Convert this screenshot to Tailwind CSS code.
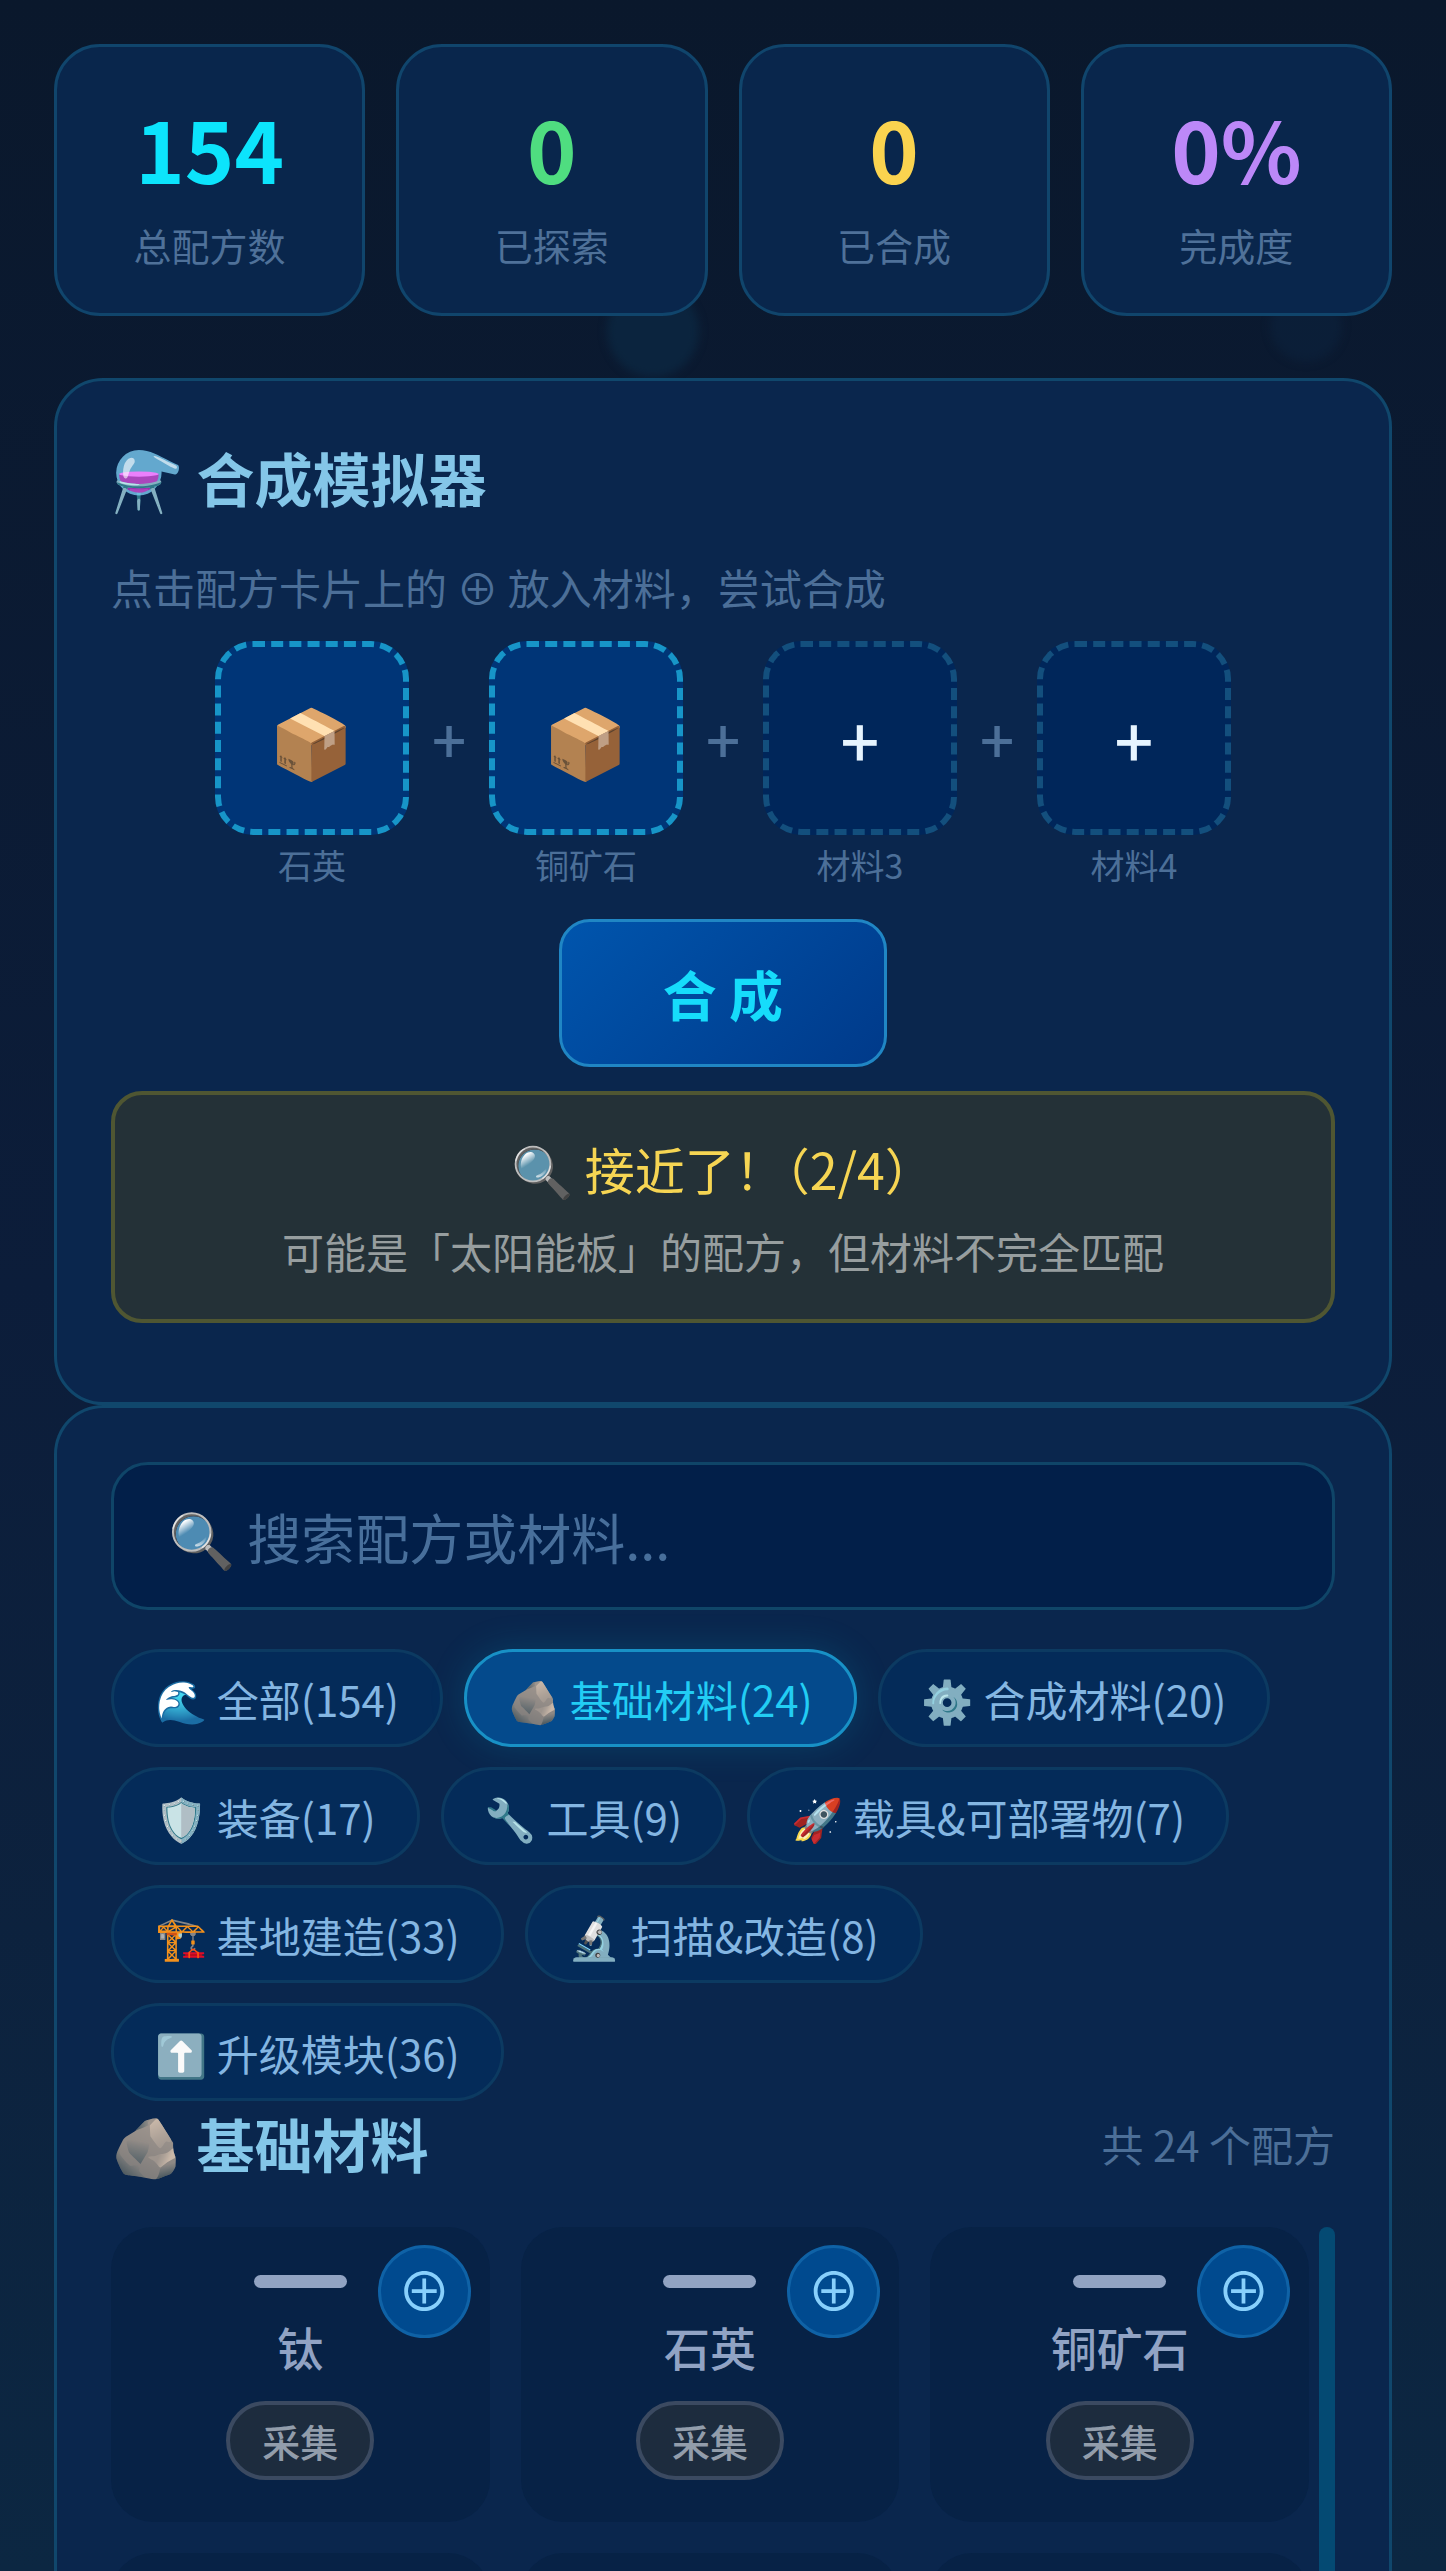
<!DOCTYPE html>
<html lang="zh-CN">
<head>
    <meta charset="UTF-8">
    <meta name="viewport" content="width=device-width, initial-scale=1.0">
    <title>合成模拟器</title>
    <script src="https://cdn.jsdelivr.net/npm/@tailwindcss/browser@4"></script>
</head>
<body class="bg-[#0a192e] font-['Noto_Sans_CJK_SC','Noto_Color_Emoji',sans-serif]">
    <div class="relative h-screen overflow-hidden bg-linear-to-b from-[#0a182c] via-[#0c1d3a] to-[#0c2742] px-[54px] pt-11">
        <!-- bubbles -->
        <div class="absolute left-[607px] top-[285px] size-[92px] rounded-full bg-[#0b2a45]/70 blur-xs"></div>
        <div class="absolute left-[1270px] top-[290px] size-[72px] rounded-full bg-[#0b233f]/50 blur-xs"></div>

        <div class="relative">
            <!-- stats -->
            <div class="grid grid-cols-4 gap-[31px]">
                <div class="h-[272px] rounded-[46px] border-3 border-[#10456c] bg-[#09264c] pt-10 text-center">
                    <div class="text-[84px] leading-[122px] font-bold text-[#0ce4fc]">154</div>
                    <div class="mt-2 text-[38px] leading-[56px] text-[#4f7199]">总配方数</div>
                </div>
                <div class="h-[272px] rounded-[46px] border-3 border-[#10456c] bg-[#09264c] pt-10 text-center">
                    <div class="text-[84px] leading-[122px] font-bold text-[#4fdd80]">0</div>
                    <div class="mt-2 text-[38px] leading-[56px] text-[#4f7199]">已探索</div>
                </div>
                <div class="h-[272px] rounded-[46px] border-3 border-[#10456c] bg-[#09264c] pt-10 text-center">
                    <div class="text-[84px] leading-[122px] font-bold text-[#fad34f]">0</div>
                    <div class="mt-2 text-[38px] leading-[56px] text-[#4f7199]">已合成</div>
                </div>
                <div class="h-[272px] rounded-[46px] border-3 border-[#10456c] bg-[#09264c] pt-10 text-center">
                    <div class="text-[84px] leading-[122px] font-bold text-[#bc88f8]">0%</div>
                    <div class="mt-2 text-[38px] leading-[56px] text-[#4f7199]">完成度</div>
                </div>
            </div>

            <!-- simulator -->
            <div class="mt-[62px] rounded-[49px] border-3 border-[#10476c] bg-[#0a264d] px-[54px] pt-[54px] pb-[79px]">
                <h2 class="text-[58px] leading-[84px] font-bold text-[#84c6e8]">⚗️ 合成模拟器</h2>
                <p class="mt-9 text-[42px] leading-[64px] text-[#4c6f98]">点击配方卡片上的 ⊕ 放入材料，尝试合成</p>

                <div class="mt-[22px] flex justify-center">
                    <div class="w-[194px] text-center">
                        <button class="flex size-[194px] items-center justify-center rounded-[38px] border-6 border-dashed border-[#1795c8] bg-[#003577] pt-0.5 text-[68px]">📦</button>
                        <div class="mt-1 text-[34px] leading-[52px] text-[#4c6f98]">石英</div>
                    </div>
                    <div class="w-20 text-center text-[60px] leading-[194px] font-medium text-[#4c6f98]">+</div>
                    <div class="w-[194px] text-center">
                        <button class="flex size-[194px] items-center justify-center rounded-[38px] border-6 border-dashed border-[#1795c8] bg-[#003577] pt-0.5 text-[68px]">📦</button>
                        <div class="mt-1 text-[34px] leading-[52px] text-[#4c6f98]">铜矿石</div>
                    </div>
                    <div class="w-20 text-center text-[60px] leading-[194px] font-medium text-[#4c6f98]">+</div>
                    <div class="w-[194px] text-center">
                        <button class="flex size-[194px] items-center justify-center rounded-[38px] border-6 border-dashed border-[#134f7d] bg-[#00265a] pt-0.5 text-[68px] font-medium text-[#e6f4ff]">+</button>
                        <div class="mt-1 text-[34px] leading-[52px] text-[#4c6f98]">材料3</div>
                    </div>
                    <div class="w-20 text-center text-[60px] leading-[194px] font-medium text-[#4c6f98]">+</div>
                    <div class="w-[194px] text-center">
                        <button class="flex size-[194px] items-center justify-center rounded-[38px] border-6 border-dashed border-[#134f7d] bg-[#00265a] pt-0.5 text-[68px] font-medium text-[#e6f4ff]">+</button>
                        <div class="mt-1 text-[34px] leading-[52px] text-[#4c6f98]">材料4</div>
                    </div>
                </div>

                <div class="mt-7 text-center">
                    <button class="h-[148px] w-[328px] rounded-[31px] border-3 border-[#2086c4] bg-linear-135 from-[#0055ad] to-[#003a8a] text-[54px] font-bold text-[#16dcfb]">合 成</button>
                </div>

                <div class="mt-6 rounded-[31px] border-4 border-[#4f5632] bg-[#243137] px-6 pt-[35px] pb-[33px] text-center">
                    <div class="text-[50px] leading-[76px] text-[#f6d553]">🔍 接近了！<span class="[font-feature-settings:'halt']">（</span>2/4）</div>
                    <div class="mt-2.5 text-[42px] leading-[70px] text-[#979e9f]">可能是「太阳能板」的配方，但材料不完全匹配</div>
                </div>
            </div>

            <!-- recipe book -->
            <div class="rounded-t-[49px] border-3 border-b-0 border-[#10476c] bg-[#0a264d] px-[54px] pt-[54px]">
                <input type="text" aria-label="搜索" placeholder="🔍 搜索配方或材料..." class="block h-[148px] w-full rounded-[37px] border-3 border-[#0f4568] bg-[#021f49] px-[54px] text-[54px] placeholder:text-[#486f9b]">

                <div class="mt-[39px] flex flex-wrap gap-x-[21px] gap-y-5 pr-4 text-[42px] text-[#84b6e2]">
                    <button class="h-[98px] rounded-full border-3 border-[#0c3a61] bg-[#042b59] px-[41px]">🌊 全部(154)</button>
                    <button class="h-[98px] rounded-full border-3 border-[#1891c6] bg-[#044a8c] px-[41px] text-[#22cdf4] shadow-[0_0_36px_#00a0c833]">🪨 基础材料(24)</button>
                    <button class="h-[98px] rounded-full border-3 border-[#0c3a61] bg-[#042b59] px-[41px]">⚙️ 合成材料(20)</button>
                    <button class="h-[98px] rounded-full border-3 border-[#0c3a61] bg-[#042b59] px-[41px]">🛡️ 装备(17)</button>
                    <button class="h-[98px] rounded-full border-3 border-[#0c3a61] bg-[#042b59] px-[41px]">🔧 工具(9)</button>
                    <button class="h-[98px] rounded-full border-3 border-[#0c3a61] bg-[#042b59] px-[41px]">🚀 载具&amp;可部署物(7)</button>
                    <button class="h-[98px] rounded-full border-3 border-[#0c3a61] bg-[#042b59] px-[41px]">🏗️ 基地建造(33)</button>
                    <button class="h-[98px] rounded-full border-3 border-[#0c3a61] bg-[#042b59] px-[41px]">🔬 扫描&amp;改造(8)</button>
                    <button class="h-[98px] rounded-full border-3 border-[#0c3a61] bg-[#042b59] px-[41px]">⬆️ 升级模块(36)</button>
                </div>

                <div class="flex items-center justify-between">
                    <h2 class="text-[58px] leading-[84px] font-bold text-[#84c6e8]">🪨 基础材料</h2>
                    <span class="text-[42px] text-[#4c6f98]">共 24 个配方</span>
                </div>

                <div class="mt-[42px] flex h-[700px] gap-2.5">
                    <div class="grid flex-1 auto-rows-[295px] grid-cols-3 gap-[31px]">
                        <div class="relative rounded-[42px] bg-[#072246] pt-12 text-center">
                            <div class="mx-auto h-[13px] w-[93px] rounded-full bg-[#91a3c2]"></div>
                            <div class="mt-6 text-[46px] leading-[68px] font-medium text-[#91a3c4]">钛</div>
                            <span class="mt-[21px] inline-block rounded-full border-4 border-[#3b4a61] bg-[#1d2c3e] px-8 text-[38px] leading-[71px] font-medium text-[#929dab]">采集</span>
                            <button aria-label="放入" class="absolute top-[18px] right-[19px] size-[93px] rounded-full border-3 border-[#0f62a6] bg-[#004a8f] pb-1.5 text-[54px] leading-none text-[#88d0fc]">⊕</button>
                        </div>
                        <div class="relative rounded-[42px] bg-[#072246] pt-12 text-center">
                            <div class="mx-auto h-[13px] w-[93px] rounded-full bg-[#91a3c2]"></div>
                            <div class="mt-6 text-[46px] leading-[68px] font-medium text-[#91a3c4]">石英</div>
                            <span class="mt-[21px] inline-block rounded-full border-4 border-[#3b4a61] bg-[#1d2c3e] px-8 text-[38px] leading-[71px] font-medium text-[#929dab]">采集</span>
                            <button aria-label="放入" class="absolute top-[18px] right-[19px] size-[93px] rounded-full border-3 border-[#0f62a6] bg-[#004a8f] pb-1.5 text-[54px] leading-none text-[#88d0fc]">⊕</button>
                        </div>
                        <div class="relative rounded-[42px] bg-[#072246] pt-12 text-center">
                            <div class="mx-auto h-[13px] w-[93px] rounded-full bg-[#91a3c2]"></div>
                            <div class="mt-6 text-[46px] leading-[68px] font-medium text-[#91a3c4]">铜矿石</div>
                            <span class="mt-[21px] inline-block rounded-full border-4 border-[#3b4a61] bg-[#1d2c3e] px-8 text-[38px] leading-[71px] font-medium text-[#929dab]">采集</span>
                            <button aria-label="放入" class="absolute top-[18px] right-[19px] size-[93px] rounded-full border-3 border-[#0f62a6] bg-[#004a8f] pb-1.5 text-[54px] leading-none text-[#88d0fc]">⊕</button>
                        </div>
                        <div class="rounded-[42px] bg-[#072246]"></div>
                        <div class="rounded-[42px] bg-[#072246]"></div>
                        <div class="rounded-[42px] bg-[#072246]"></div>
                    </div>
                    <div class="w-4 rounded-full bg-[#044a73]"></div>
                </div>
            </div>
        </div>
    </div>
</body>
</html>
